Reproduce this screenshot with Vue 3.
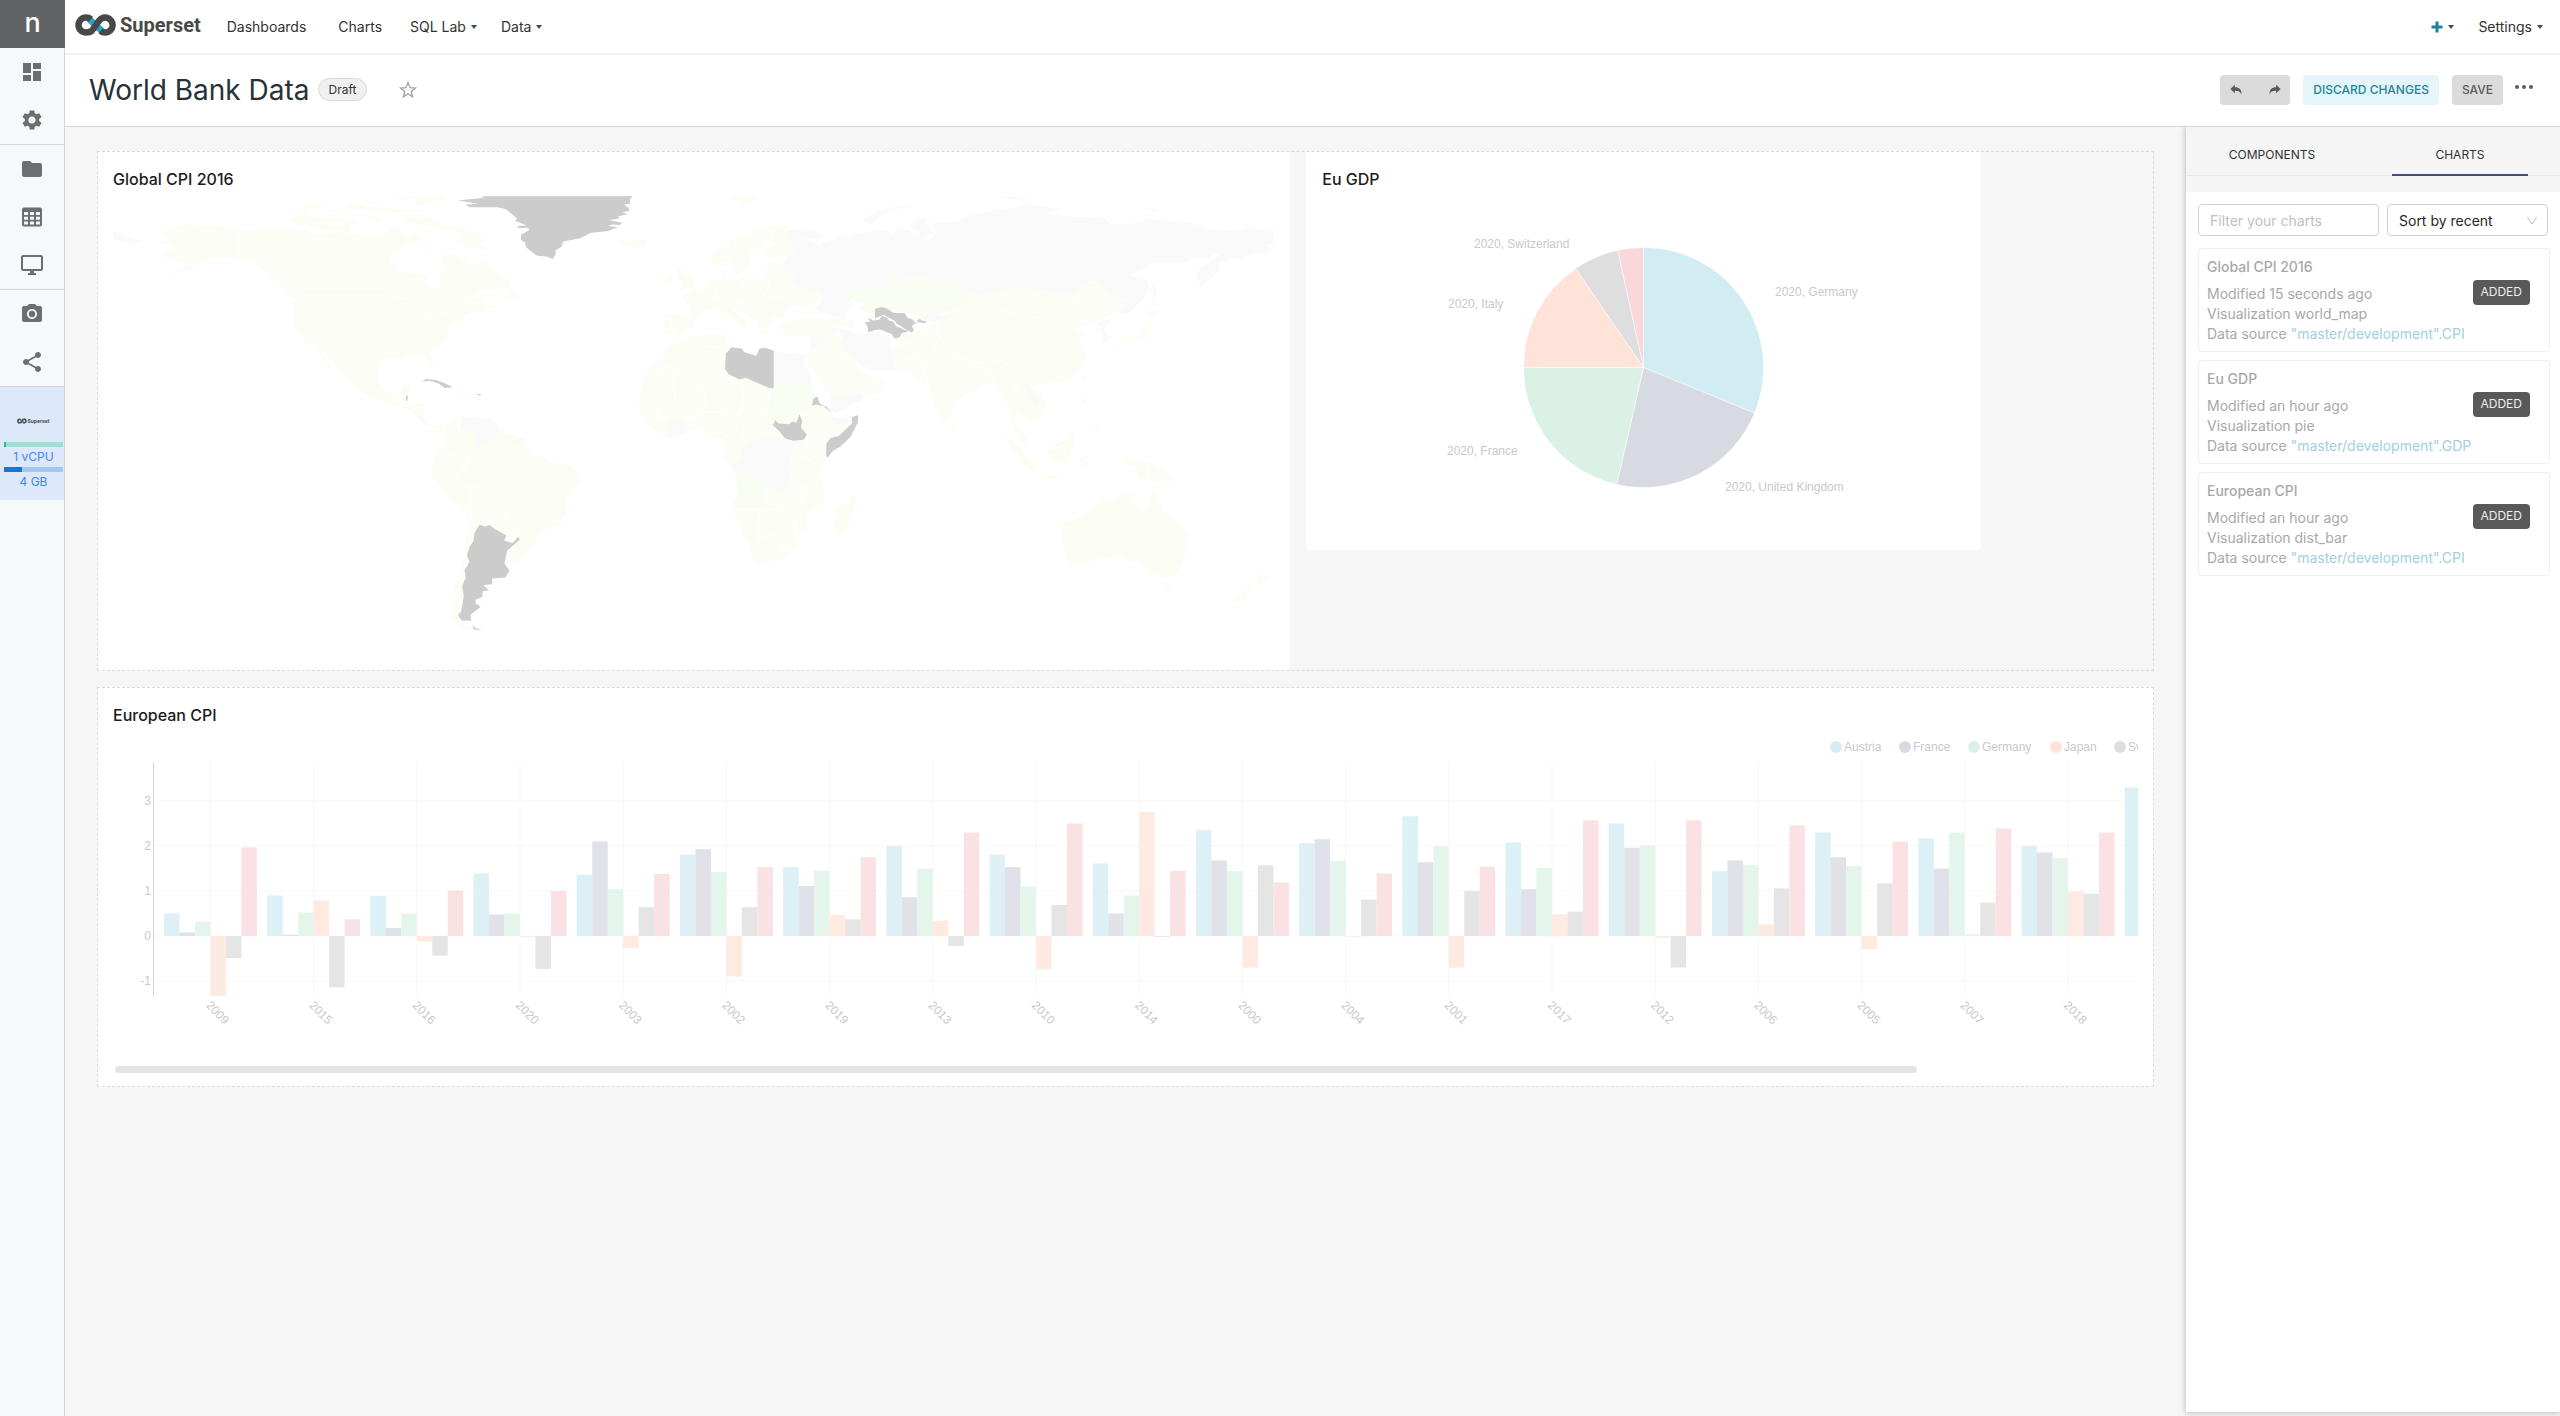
<script setup>
import { ref } from 'vue'

const filterText = ref('')
const sortBy = ref('recent')

const cards = [
  { title: 'Global CPI 2016', modified: '15 seconds ago', viz: 'world_map', source: '"master/development".CPI' },
  { title: 'Eu GDP', modified: 'an hour ago', viz: 'pie', source: '"master/development".GDP' },
  { title: 'European CPI', modified: 'an hour ago', viz: 'dist_bar', source: '"master/development".CPI' },
]

const navItems = [
  { label: 'Dashboards' },
  { label: 'Charts' },
  { label: 'SQL Lab', caret: true },
  { label: 'Data', caret: true },
]

/* Pie chart: end angle of each slice, clockwise from the top */
const pie = { cx: 321.5, cy: 171.5, r: 120 }
const stops = [
  [0, 112.3, '#d2ecf3'],
  [112.3, 192.9, '#d8dae2'],
  [192.9, 270, '#dbf1e5'],
  [270, 325.6, '#ffe2d8'],
  [325.6, 347.6, '#dedede'],
  [347.6, 360, '#f9d7da'],
]
const polar = (deg) => {
  const a = (deg * Math.PI) / 180
  return `${(pie.cx + pie.r * Math.sin(a)).toFixed(2)} ${(pie.cy - pie.r * Math.cos(a)).toFixed(2)}`
}
const slices = stops.map(([from, to, color]) => ({
  color,
  d: `M${pie.cx} ${pie.cy}L${polar(from)}A${pie.r} ${pie.r} 0 0 1 ${polar(to)}Z`,
}))
const pieLabels = [
  { text: '2020, Switzerland', x: 152, y: 52 },
  { text: '2020, Germany', x: 453, y: 100 },
  { text: '2020, Italy', x: 126, y: 112 },
  { text: '2020, France', x: 125, y: 259 },
  { text: '2020, United Kingdom', x: 403, y: 295 },
]

/* Grouped bars: Austria, France, Germany, Japan, Switzerland, United Kingdom */
const barColors = ['#dcf0f6', '#e1e1ea', '#e4f5eb', '#ffeae1', '#e5e5e5', '#fae1e4']
const years = [
  ['2009', [0.5, 0.08, 0.32, -1.33, -0.49, 1.97]],
  ['2015', [0.9, 0.03, 0.52, 0.79, -1.14, 0.37]],
  ['2016', [0.89, 0.18, 0.5, -0.12, -0.44, 1.01]],
  ['2020', [1.39, 0.48, 0.5, -0.02, -0.73, 1]],
  ['2003', [1.36, 2.1, 1.04, -0.27, 0.64, 1.38]],
  ['2002', [1.81, 1.93, 1.42, -0.9, 0.64, 1.53]],
  ['2019', [1.53, 1.11, 1.45, 0.47, 0.37, 1.75]],
  ['2013', [2, 0.86, 1.5, 0.34, -0.22, 2.3]],
  ['2010', [1.81, 1.53, 1.1, -0.74, 0.69, 2.5]],
  ['2014', [1.61, 0.5, 0.9, 2.76, -0.02, 1.45]],
  ['2000', [2.35, 1.68, 1.44, -0.7, 1.57, 1.19]],
  ['2004', [2.06, 2.15, 1.67, -0.02, 0.81, 1.39]],
  ['2001', [2.66, 1.64, 1.99, -0.7, 1, 1.54]],
  ['2017', [2.08, 1.04, 1.51, 0.48, 0.54, 2.57]],
  ['2012', [2.5, 1.96, 2.01, -0.04, -0.7, 2.57]],
  ['2006', [1.44, 1.68, 1.58, 0.26, 1.06, 2.46]],
  ['2005', [2.3, 1.75, 1.55, -0.29, 1.17, 2.1]],
  ['2007', [2.17, 1.5, 2.3, 0.04, 0.74, 2.39]],
  ['2018', [2, 1.86, 1.73, 0.99, 0.94, 2.3]],
  ['2011', [3.3]],
]
const zeroY = 205
const unit = 45
const step = 103.2
const barWidth = step * 0.15
const ticks = years.map(([label], i) => ({ label, x: 97.4 + i * step }))
const bars = years.flatMap(([, values], i) =>
  values.map((v, j) => ({
    x: 97.4 + i * step + (j - 3) * barWidth,
    y: v > 0 ? zeroY - v * unit : zeroY,
    h: Math.abs(v) * unit,
    color: barColors[j],
  })),
)
const legend = [
  { label: 'Austria', x: 1723, color: '#d2ecf3' },
  { label: 'France', x: 1792, color: '#d8dae2' },
  { label: 'Germany', x: 1861, color: '#dbf1e5' },
  { label: 'Japan', x: 1943, color: '#ffe2d8' },
  { label: 'Switzerland', x: 2007, color: '#dedede' },
]
</script>

<template>
  <div class="app">
    <svg class="defs" aria-hidden="true">
      <symbol id="infinity" viewBox="0 0 42 22">
        <path d="M14 5L28 18" stroke="#20a7c9" stroke-width="6.500" fill="none" />
        <path
          d="M17.500 16.500C15 18.300 13.500 18.500 11 18.500A7.500 7.500 0 0 1 11 3.500C13 3.500 14.500 4 16 5.200M16 17.500C20 14 22 7.500 26.500 4.500A7.500 7.500 0 1 1 25.500 17"
          stroke="#484848" stroke-width="6.500" fill="none"
        />
      </symbol>
    </svg>

    <aside class="rail">
      <a class="rail-brand" href="#">n</a>
      <nav class="rail-group" aria-label="Workspace">
        <a href="#" aria-label="Overview"><svg viewBox="0 0 24 24"><path d="M3 13h8V3H3v10zm0 8h8v-6H3v6zm10 0h8V11h-8v10zm0-18v6h8V3h-8z" /></svg></a>
        <a href="#" aria-label="Configuration"><svg viewBox="0 0 24 24"><path d="M19.140 12.940c.04-.3.06-.61.06-.94 0-.32-.02-.64-.07-.94l2.030-1.580a.49.49 0 0 0 .12-.61l-1.920-3.320a.488.488 0 0 0-.59-.22l-2.390.96c-.5-.38-1.030-.7-1.620-.94l-.36-2.540a.484.484 0 0 0-.48-.41h-3.840c-.24 0-.43.17-.47.41l-.36 2.540c-.59.24-1.130.57-1.620.94l-2.390-.96c-.22-.08-.47 0-.59.22L2.740 8.870c-.12.21-.08.47.12.61l2.030 1.580c-.05.3-.09.63-.09.94s.02.64.07.94l-2.030 1.580a.49.49 0 0 0-.12.61l1.920 3.320c.12.22.37.29.59.22l2.390-.96c.5.38 1.030.7 1.620.94l.36 2.540c.05.24.24.41.48.41h3.840c.24 0 .44-.17.47-.41l.36-2.540c.59-.24 1.130-.56 1.620-.94l2.390.96c.22.08.47 0 .59-.22l1.920-3.320c.12-.22.07-.47-.12-.61l-2.010-1.580zM12 15.600A3.610 3.610 0 0 1 8.400 12c0-1.980 1.620-3.600 3.600-3.600s3.600 1.620 3.600 3.600-1.620 3.600-3.600 3.600z" /></svg></a>
      </nav>
      <nav class="rail-group" aria-label="Resources">
        <a href="#" aria-label="Files"><svg viewBox="0 0 24 24"><path d="M10 4H4c-1.100 0-1.990.9-1.990 2L2 18c0 1.100.9 2 2 2h16c1.100 0 2-.9 2-2V8c0-1.100-.9-2-2-2h-8l-2-2z" /></svg></a>
        <a href="#" aria-label="Tables"><svg viewBox="0 0 24 24"><path fill-rule="evenodd" d="M4 2.500h16a2 2 0 0 1 2 2v15a2 2 0 0 1-2 2H4a2 2 0 0 1-2-2v-15a2 2 0 0 1 2-2zM4 7v3h4V7zm6 0v3h4V7zm6 0v3h4V7zM4 11.700v3h4v-3zm6 0v3h4v-3zm6 0v3h4v-3zM4 16.400v3h4v-3zm6 0v3h4v-3zm6 0v3h4v-3z" /></svg></a>
        <a href="#" aria-label="Desktop"><svg viewBox="0 0 24 24"><path d="M21 2H3c-1.100 0-2 .9-2 2v12c0 1.100.9 2 2 2h7v2H8v2h8v-2h-2v-2h7c1.100 0 2-.9 2-2V4c0-1.100-.9-2-2-2zm0 14H3V4h18v12z" /></svg></a>
      </nav>
      <nav class="rail-group" aria-label="Sharing">
        <a href="#" aria-label="Snapshots"><svg viewBox="0 0 24 24"><circle cx="12" cy="12" r="3.200" /><path d="M9 2L7.170 4H4c-1.100 0-2 .9-2 2v12c0 1.100.9 2 2 2h16c1.100 0 2-.9 2-2V6c0-1.100-.9-2-2-2h-3.170L15 2H9zm3 15c-2.760 0-5-2.240-5-5s2.240-5 5-5 5 2.240 5 5-2.240 5-5 5z" /></svg></a>
        <a href="#" aria-label="Share"><svg viewBox="0 0 24 24"><path d="M18 16.080c-.76 0-1.440.3-1.960.77L8.910 12.700c.05-.23.09-.46.09-.7s-.04-.47-.09-.7l7.050-4.110c.54.5 1.250.81 2.040.81 1.660 0 3-1.340 3-3s-1.340-3-3-3-3 1.340-3 3c0 .24.04.47.09.7L8.040 9.810C7.500 9.310 6.790 9 6 9c-1.660 0-3 1.340-3 3s1.340 3 3 3c.79 0 1.500-.31 2.040-.81l7.120 4.160c-.05.21-.08.43-.08.65 0 1.610 1.310 2.920 2.920 2.920s2.920-1.310 2.920-2.920-1.310-2.920-2.920-2.920z" /></svg></a>
      </nav>
      <div class="rail-app">
        <a class="mini-logo" href="#"><svg><use href="#infinity" /></svg><b>Superset</b></a>
        <div class="meter cpu"><i></i></div>
        <span>1 vCPU</span>
        <div class="meter mem"><i></i></div>
        <span>4 GB</span>
      </div>
    </aside>

    <div class="main">
      <header class="topbar">
        <a class="logo" href="#"><svg><use href="#infinity" /></svg><span>Superset</span></a>
        <nav class="menu">
          <a v-for="n in navItems" :key="n.label" href="#">{{ n.label }}<i v-if="n.caret" class="caret"></i></a>
        </nav>
        <nav class="menu right">
          <a href="#" aria-label="New"><svg class="plus" viewBox="0 0 12 12"><path d="M6 0.500v11M0.500 6h11" stroke="#1a85a0" stroke-width="3" /></svg><i class="caret"></i></a>
          <a href="#">Settings<i class="caret"></i></a>
        </nav>
      </header>

      <div class="titlebar">
        <h1>World Bank Data</h1>
        <span class="draft">Draft</span>
        <button class="star" aria-label="Favorite"><svg viewBox="0 0 24 24"><path d="M22 9.240l-7.190-.62L12 2 9.190 8.630 2 9.240l5.460 4.730L5.820 21 12 17.270 18.180 21l-1.630-7.030L22 9.240zM12 15.400l-3.760 2.270 1-4.280-3.320-2.880 4.380-.38L12 6.100l1.710 4.040 4.380.38-3.320 2.880 1 4.280L12 15.400z" /></svg></button>
        <div class="actions">
          <div class="history">
            <button aria-label="Undo"><svg viewBox="0 0 16 14"><path d="M6 0.500v3c5.500 0 8.500 2.500 8 9.500-1.200-4-3.500-5-8-5v3L0.500 5.800z" /></svg></button>
            <button aria-label="Redo"><svg viewBox="0 0 16 14"><path d="M10 0.500v3c-5.500 0-8.500 2.500-8 9.500 1.200-4 3.500-5 8-5v3l5.500-5.200z" /></svg></button>
          </div>
          <button class="btn discard">DISCARD CHANGES</button>
          <button class="btn save">SAVE</button>
          <button class="more" aria-label="More actions"><i></i><i></i><i></i></button>
        </div>
      </div>

      <div class="workspace">
        <main class="grid">
          <section class="row split">
            <article class="tile map-tile">
              <h2>Global CPI 2016</h2>
              <svg class="chart" viewBox="0 0 1161 459" role="img" aria-label="World map">
                <g transform="matrix(.3954 0 0 .3444 -23 -56)">
                  <g class="land">
                    <path d="M165 297L205 290 180 268 210 255 250 244 300 250 375 258 400 265 450 255 500 258 550 262 560 275 620 270 660 262 650 270 700 280 745 275 760 250 790 262 800 285 830 270 850 290 800 305 760 335 757 355 790 382 850 393 858 425 882 430 885 395 900 370 888 350 890 325 930 335 975 365 1000 345 1025 380 1070 415 1060 430 990 437 950 465 1000 455 990 485 1030 482 990 500 985 490 945 510 945 520 905 545 905 578 865 610 860 625 872 665 862 665 848 628 800 625 790 633 750 630 730 650 727 690 745 730 780 738 790 713 815 710 805 745 795 765 845 765 843 805 865 830 893 825 895 838 870 835 845 825 820 797 790 775 740 758 690 735 667 722 665 705 630 665 600 618 585 612 600 645 630 692 600 655 575 602 545 585 517 540 515 470 527 468 485 435 455 395 410 355 375 347 320 340 290 350 240 380 188 397 240 370 250 358 215 350 175 335 185 320 215 315 205 300Z" />
                    <path d="M505 235L515 212 550 213 570 225 640 228 680 240 650 252 660 262 600 262 545 245 500 238ZM530 195L575 183 600 190 540 205ZM590 210L625 200 640 208ZM640 200L660 185 720 190 740 198 830 202 870 208 780 212 700 205ZM755 163L905 163 890 178 840 190 815 185 830 175ZM675 170L700 175 740 183 700 185ZM790 225L850 222 880 232 895 245 940 255 970 272 1015 290 990 298 1005 320 975 315 940 305 920 295 945 280 925 262 880 258 860 250 810 245ZM700 220L730 225 745 240 720 238ZM825 300L850 308 862 322 840 312ZM1045 460L1065 432 1070 445 1085 452 1095 468 1075 462ZM930 727L950 728 968 735 940 737ZM1335 290L1380 292 1408 290 1405 305 1375 313 1345 305ZM1480 370L1495 362 1505 372 1500 385 1520 400 1535 418 1525 430 1490 432 1500 418 1490 400ZM1452 415L1460 397 1475 398 1468 415Z" />
                    <path d="M895 838L912 808 938 800 930 835 975 850 990 870 1030 835 1060 857 1100 865 1115 910 1150 920 1165 935 1205 942 1240 965 1242 990 1208 1035 1203 1080 1190 1115 1150 1133 1128 1150 1128 1175 1095 1215 1080 1235 1050 1228 1055 1192 1087 1160 1053 1148 1010 1118 985 1117 972 1140 953 1205 947 1250 941 1295 945 1325 930 1378 940 1395 968 1408 970 1425 940 1418 915 1385 912 1350 925 1320 920 1300 940 1240 955 1120 955 1080 905 1042 880 1000 864 965 868 915 888 895 897 868Z" />
                  </g>
                  <path class="none" d="M58 265L90 275 105 287 133 290 110 303 85 295 58 288ZM938 800L960 805 1020 812 1035 830 1027 860 990 898 980 895 975 850 935 840ZM1082 862L1103 870 1090 886 1080 882Z" />
                  <path class="mid" d="M1060 857L1080 855 1083 885 1065 888 1055 872Z" />
                  <g class="edge">
                    <path d="M375 258V347M527 452H750L820 465 855 490 848 517 910 500 965 465M575 602L650 612 690 635 727 665M410 350L440 362 485 420M765 757L790 740M795 790L843 775M962 1010L960 1080 970 1125M930 960L950 950 960 900 990 898M888 900L915 915 950 935M962 1010L990 1003 1000 1018 1035 1045 1055 1080 1052 1110 1085 1145M1015 1115L1022 1092 1052 1092M955 945L925 975 940 1000 962 1010M880 950L912 915M1060 1190L1095 1215" />
                  </g>
                  <path class="dark" d="M930 176L995 168 990 163H1372L1365 172 1366 185 1350 187 1362 197 1364 206 1345 210 1360 215 1335 222 1340 227 1312 232 1345 240 1340 247 1320 245 1310 250 1335 253 1310 264 1265 270 1240 285 1197 295 1192 310 1177 320 1178 330 1170 346 1155 338 1130 336 1103 312 1100 298 1090 290V275L1110 262 1108 255 1085 256 1080 250 1105 248 1075 235 1080 228 1050 200 1030 195H960L950 188 980 185Z" />
                  <path class="dark" d="M985 1117L1000 1122 1010 1118 1025 1130 1053 1148 1047 1163 1068 1170 1083 1152 1087 1160 1055 1192 1048 1230 1061 1250 1050 1270 1017 1273V1290L995 1292 1008 1307 993 1310 992 1327 975 1335V1345L988 1355 962 1378 964 1396 940 1395 930 1378 938 1370 945 1325 941 1295 950 1270 947 1250 959 1225 953 1205 960 1180 970 1163 972 1140ZM968 1408L975 1417 992 1425 970 1420ZM838 702L850 694 875 697 900 708 917 718 898 720 880 706 860 699ZM799 745L804 740 803 756 799 757ZM978 738h11v3h-11z" />
                </g>
                <g transform="matrix(.3954 0 0 .3444 587 -56)">
                  <g class="land">
                    <path d="M26 330L60 312 100 275 150 255 200 245 232 250 218 262 230 290 240 320 220 340 170 342 157 325 190 298 165 292 155 310 125 325 130 350 115 375 95 392 78 370 75 350 35 362ZM75 163L145 165 130 180 115 188 95 178Z" />
                    <path d="M175 358L210 355 210 375 235 395 250 425 305 445 310 460 262 490 240 480 215 490 215 515 175 510 185 525 170 540 172 565 155 560 140 525 80 480 75 490 120 525 108 555 95 530 40 485 10 495 -10 515 -20 545 -50 568 -90 562 -92 505 -25 510 -28 480 -50 458 -20 437 10 430 30 408 55 402 52 380 68 375 65 400 160 405 165 380Z" />
                    <path d="M200 535L225 525 270 515 330 520 345 530 347 557 330 565 275 570 215 568ZM320 512L385 525 388 545 350 540Z" />
                    <path d="M280 572L320 565 345 558 375 620 400 660 430 690 440 683 470 700 455 735 413 750 332 750 275 650 272 610Z" />
                    <path d="M480 600L530 560 600 530 640 490 705 447 750 437 800 428 900 440 950 443 970 412 1015 415 1045 455 1085 460 1050 500 1000 530 945 548 975 560 958 580 978 630 960 670 925 700 870 710 845 712 875 765 870 800 845 822 830 805 800 785 793 820 825 860 828 895 805 870 790 830 785 765 765 755 740 700 710 710 640 765 635 810 615 830 590 770 578 712 550 700 530 672 497 670 490 640Z" />
                    <path d="M-60 583L-30 578 0 567 55 562 70 575 62 600 80 602 142 626 165 603 186 612 230 620 265 625 262 640 283 700 290 745 334 793 345 812 400 799 398 822 355 890 322 923 302 955 315 1015 312 1050 270 1090 272 1130 250 1145 245 1175 210 1215 145 1233 133 1220 125 1180 105 1150 100 1110 80 1075 95 1020 88 965 78 945 57 920 62 870 35 865 5 835 -40 850 -80 865 -125 835 -150 800 -155 770 -148 705 -125 655 -95 635 -90 605ZM388 1030L395 1050 370 1140 350 1147 338 1130 345 1070 375 1050ZM636 820L648 835 645 852 636 848Z" />
                    <path d="M915 1115L970 1090 1015 1042 1040 1052 1065 1022 1100 1025 1090 1052 1130 1077 1147 1012 1175 1080 1235 1150 1237 1180 1205 1260 1180 1272 1130 1255 1108 1215 1090 1230 1060 1203 990 1222 930 1237 915 1150ZM1170 1295L1192 1297 1190 1310 1175 1313ZM1405 1242L1420 1262 1438 1270 1420 1290 1408 1285ZM1395 1295L1402 1303 1365 1342 1345 1338Z" />
                    <path d="M765 860L790 870 830 920 848 940 846 965 825 950ZM850 968L900 975 925 988 880 985ZM875 900L925 870 940 850 950 858 940 900 930 942 890 935ZM960 925L985 915 970 930 985 958 965 940 958 955ZM1060 920L1085 930 1130 933 1160 950 1190 975 1207 1003 1175 988 1145 993 1110 980 1100 948 1075 940ZM965 740L980 742 978 770 1000 785 985 778 968 765ZM980 835L1012 825 1008 850ZM1140 490L1168 500 1150 520 1128 510ZM1132 525L1140 545 1128 578 1100 582 1062 592 1060 585 1115 565ZM1045 598L1060 600 1052 615ZM873 730L888 725 880 738ZM1198 965L1225 950 1210 962Z" />
                  </g>
                  <path class="mid" d="M370 440L420 430 480 432 480 408 550 395 610 405 660 435 705 447 640 490 600 507 560 510 520 503 460 485 442 490 442 520 425 500 400 490 415 475 372 460ZM88 967L115 967 125 985 155 980 162 1070 80 1068 95 1020ZM180 707L283 705 290 745 283 772 250 797 243 820 198 823 168 790Z" />
                  <path class="none" d="M218 262L240 257 290 265 318 280 300 290 260 283 280 295 300 310 320 292 345 290 350 270 360 283 400 270 470 262 485 272 500 255 530 262 545 280 555 270 530 250 545 232 573 228 575 250 590 270 565 288 580 290 597 270 590 235 610 240 650 235 690 215 760 200 800 195 830 185 910 200 870 215 940 223 1020 225 1040 245 1120 240 1125 228 1240 240 1290 258 1370 265 1380 255 1452 262V298L1432 305 1447 322 1400 330 1370 345 1340 345 1310 360 1315 378 1265 428 1255 390 1265 370 1325 325 1300 332 1290 342 1250 340 1230 355 1150 355 1087 395 1130 405 1135 430 1115 470 1080 505 1055 500 1085 460 1045 455 1020 425 1000 410 970 412 950 443 900 440 800 428 750 437 705 447 660 435 610 405 550 395 480 408 480 432 420 430 370 440 372 460 390 475 375 490 365 520 330 508 290 490 310 460 305 445 250 425 235 395 210 375 215 345 240 320 230 290ZM408 237L440 208 480 196 545 191 480 205 445 232 440 245ZM745 164L795 164 840 175 790 172ZM1105 198L1160 200 1150 206ZM1143 408L1158 445 1147 468Z" />
                  <path class="none" d="M345 545L385 555 400 565 440 555 480 570 482 600 490 640 497 670 440 670 405 652 365 610 360 570ZM330 748L405 735 413 752 345 792 332 785ZM186 612L265 625 262 640 283 704H186ZM140 868L230 865 235 885 222 940 228 985 215 1020 160 1005 155 980 125 985 115 965 85 965 80 940 105 930 105 895ZM-82 815H-42V855L-82 862ZM334 805L384 804V823L345 830ZM553 515L580 505 635 510 590 530 575 525ZM280 572L325 563 310 590 280 605ZM1005 530L1040 517 1022 548 1038 575 1020 588 1015 555ZM805 712L830 710 858 760 848 775 830 735ZM966 690L975 678 972 697Z" />
                  <g class="edge">
                    <path d="M705 447L735 485 800 505 850 515 890 510 935 478 963 467 935 455M600 530L600 560 625 600 640 628 710 650 765 640 790 670 830 700 870 705M640 628L645 645 730 668 740 695M578 712L560 650 590 615 600 580 565 555M480 600L530 590 565 555M490 640L540 635 560 600M765 655L745 690M790 745L800 710M80 320L100 285 130 268 175 265 185 295M60 405L105 405 110 440 170 440 175 400M35 430L40 460 90 470 150 460 170 440M0 440L38 462M170 455L220 460 240 480M90 470L130 495 160 510M-75 510L-70 560M-92 655L-40 690 8 725 60 695M-70 675L-62 765 -115 770M-85 655L-115 700M105 695L110 745 100 800 60 790 0 790 -20 785M8 725L15 760 0 790M180 707L168 790 110 835 60 865M100 800L110 835 105 870M-42 815L-20 800 0 830M-115 770L-105 800 -82 815M-120 790L-90 820M270 865L265 885 320 885M235 885L265 920 302 950M225 930L265 920M228 985L260 1010 315 1010M162 1070L200 1075 240 1040 265 1050M150 1080L145 1180 125 1180M80 1070L162 1074M150 1155L190 1145 240 1115 245 1175M200 1075L240 1115 255 1060 260 1010M-1 567L10 600 60 602M332 750L275 650M320 590L375 640M405 735L440 710 440 683M1134 935V993M880 900L915 890 940 865M210 1180l10 5-8 12-10-4z" />
                  </g>
                  <path class="dark" d="M65 620L80 602 105 605 112 616 142 626 150 606 165 603 186 612V720L176 721 115 690 100 695 72 680 63 665ZM283 772L286 752 296 744 302 765 320 775 334 793 312 772 292 768ZM184 828L190 813 198 823 225 825 232 817 243 820 251 797 258 815 255 835 270 856 262 870 235 873 214 866 200 845ZM400 799L398 822 380 862 355 890 335 903 322 923 319 915V882L330 865 350 860 384 823V804Z" />
                  <path class="dark" d="M416 530L430 527 424 515 438 524 452 522 460 511 472 515 478 525 488 526 495 540 527 556 510 560 505 572 492 577 484 563 455 550 440 552 425 558 423 540ZM442 490L460 485 475 491 490 502 518 503 523 515 535 520 545 530 555 518 560 524 575 527 565 532 550 528 535 540 541 552 535 559 520 550 497 533 490 523 475 515 465 507 452 513 442 518Z" />
                </g>
              </svg>
            </article>

            <article class="tile pie-tile">
              <h2>Eu GDP</h2>
              <svg class="chart" viewBox="0 0 643 338" role="img" aria-label="Pie chart">
                <path v-for="s in slices" :key="s.color" :d="s.d" :fill="s.color" stroke="#fff" stroke-opacity="0.5" />
                <text v-for="l in pieLabels" :key="l.text" :x="l.x" :y="l.y">{{ l.text }}</text>
              </svg>
            </article>
          </section>

          <section class="row bar-row">
            <article class="tile">
              <h2>European CPI</h2>
              <svg class="chart" viewBox="0 1 2025 334" role="img" aria-label="Grouped bar chart">
                <g v-for="l in legend" :key="l.label">
                  <circle :cx="l.x" cy="16" r="6" :fill="l.color" />
                  <text :x="l.x + 8" y="20">{{ l.label }}</text>
                </g>
                <g class="gridlines">
                  <path v-for="t in ticks.slice(0, 19)" :key="t.label" :d="`M${t.x} 31V265`" />
                  <path v-for="v in [3, 2, 1, 0, -1]" :key="v" :d="`M41 ${zeroY - v * unit}H2025`" />
                </g>
                <rect v-for="(b, i) in bars" :key="i" :x="b.x" :y="b.y" :width="barWidth" :height="b.h" :fill="b.color" />
                <path d="M40.500 31V265" stroke="#d4d4d4" />
                <text v-for="v in [3, 2, 1, 0, -1]" :key="v" class="tick" x="38" :y="zeroY - v * unit + 4">{{ v }}</text>
                <text v-for="t in ticks.slice(0, 19)" :key="t.label" :transform="`translate(${t.x - 5} 275) rotate(45)`">{{ t.label }}</text>
              </svg>
              <div class="scroll"><i></i></div>
            </article>
          </section>
        </main>

        <aside class="panel">
          <div class="tabs" role="tablist">
            <button role="tab" aria-selected="false">COMPONENTS</button>
            <button role="tab" aria-selected="true" class="active">CHARTS</button>
          </div>
          <div class="filters">
            <input v-model="filterText" type="text" placeholder="Filter your charts" aria-label="Filter your charts" />
            <div class="select">
              <select v-model="sortBy" aria-label="Sort charts">
                <option value="recent">Sort by recent</option>
                <option value="name">Sort by name</option>
              </select>
              <svg viewBox="0 0 10 8"><path d="M0.500 0.500L5 7 9.500 0.500" fill="none" stroke="#bfbfbf" /></svg>
            </div>
          </div>
          <ul class="cards">
            <li v-for="c in cards" :key="c.title">
              <div class="info">
                <h3>{{ c.title }}</h3>
                <p>Modified {{ c.modified }}</p>
                <p>Visualization {{ c.viz }}</p>
                <p>Data source <a href="#">{{ c.source }}</a></p>
              </div>
              <span class="added">ADDED</span>
            </li>
          </ul>
        </aside>
      </div>
    </div>
  </div>
</template>

<style>
body {
  margin: 0;
}
</style>

<style scoped>
* {
  box-sizing: border-box;
}
.app {
  display: flex;
  min-height: 100vh;
  font-family: Inter, "Liberation Sans", sans-serif;
  font-size: 14px;
  color: #323232;
  background: #f6f6f6;
}
a {
  color: inherit;
  text-decoration: none;
}
button {
  font: inherit;
  color: inherit;
  border: 0;
  padding: 0;
  background: none;
}
h1,
h2,
h3,
p,
ul {
  margin: 0;
  padding: 0;
}
.defs {
  position: absolute;
  width: 0;
  height: 0;
}

.rail {
  flex: 0 0 65px;
  border-right: 1px solid #d4d5d8;
  background: #f7f8fb;
}
.rail-brand {
  display: block;
  height: 48px;
  margin-right: -1px;
  line-height: 46px;
  text-align: center;
  font-size: 27px;
  font-weight: 500;
  color: #fff;
  background: #626365;
}
.rail-group {
  border-bottom: 1px solid #d4d5d8;
}
.rail-group a {
  display: flex;
  align-items: center;
  justify-content: center;
  height: 48px;
}
.rail-group svg {
  width: 24px;
  height: 24px;
  fill: #6d6e70;
}
.rail-app {
  height: 113px;
  padding: 28px 1px 0 4px;
  background: #dde8fb;
  color: #4285f4;
  font-size: 12px;
  line-height: 20px;
  text-align: center;
}
.rail-app span {
  display: block;
}
.mini-logo {
  display: flex;
  align-items: center;
  justify-content: center;
  height: 12px;
  margin-bottom: 15px;
  font-size: 5px;
  line-height: 12px;
  color: #484848;
}
.mini-logo svg {
  width: 10px;
  height: 6px;
}
.meter {
  height: 5px;
}
.meter i {
  display: block;
  height: 5px;
}
.cpu {
  background: #a2dfd1;
}
.cpu i {
  width: 2px;
  background: #19c37d;
}
.mem {
  background: #a3c7ef;
}
.mem i {
  width: 30%;
  background: #1478d4;
}

.main {
  flex: 1;
  min-width: 0;
  display: flex;
  flex-direction: column;
}
.topbar {
  display: flex;
  align-items: center;
  height: 55px;
  padding: 0 17px 0 10px;
  border-bottom: 2px solid #f2f2f2;
  background: #fff;
}
.logo {
  display: flex;
  align-items: center;
  margin-right: 26px;
  padding-bottom: 4px;
  font-family: Roboto, "Liberation Sans", sans-serif;
  font-size: 20px;
  font-weight: 700;
  color: #484848;
}
.logo svg {
  width: 42px;
  height: 22px;
  margin-right: 3px;
}
.menu {
  display: flex;
  gap: 32px;
}
.menu a {
  display: flex;
  align-items: center;
}
.menu a:nth-child(3) {
  margin-left: -4px;
}
.menu a:nth-child(4) {
  margin-left: -8px;
}
.menu.right {
  gap: 24px;
  margin-left: auto;
}
.caret {
  margin-left: 5px;
  border: 3px solid transparent;
  border-top: 4px solid #4a4a4a;
  border-bottom: 0;
}
.plus {
  width: 12px;
  height: 12px;
}
.titlebar {
  display: flex;
  align-items: center;
  height: 72px;
  padding: 0 27px 2px 24px;
  border-bottom: 1px solid #d9d9d9;
  background: #fff;
}
h1 {
  font-size: 28px;
  font-weight: 400;
  color: #263238;
}
.draft {
  height: 23px;
  margin-left: 8px;
  padding: 0 10px;
  border: 1px solid #d9d9d9;
  border-radius: 12px;
  background: #f0f0f0;
  font-size: 12px;
  line-height: 21px;
}
.star {
  margin-left: 30px;
}
.star svg {
  display: block;
  width: 22px;
  height: 22px;
  fill: #a8a8a8;
}
.actions {
  display: flex;
  align-items: center;
  gap: 13px;
  margin-left: auto;
  font-size: 12px;
}
.history {
  display: flex;
}
.history button {
  display: flex;
  align-items: center;
  justify-content: center;
  width: 35px;
  height: 30px;
  padding-right: 3px;
  background: #dbdbdb;
  border-radius: 4px 0 0 4px;
}
.history button + button {
  padding: 0 0 0 3px;
  border-radius: 0 4px 4px 0;
}
.history svg {
  width: 13px;
  height: 12px;
  fill: #595959;
}
.btn {
  height: 30px;
  padding: 0 10px;
  border-radius: 4px;
  font-weight: 500;
}
.discard {
  background: #e6f5f9;
  color: #1a85a0;
}
.save {
  background: #dbdbdb;
  color: #5c5c5c;
}
.more {
  display: flex;
  gap: 3px;
  margin-left: -1px;
  padding-bottom: 5px;
}
.more i {
  width: 4px;
  height: 4px;
  border-radius: 2px;
  background: #5c5c5c;
}

.workspace {
  flex: 1;
  display: flex;
}
.grid {
  flex: 1;
  min-width: 0;
  padding: 24px 32px;
}
.row {
  outline: 1px dashed #dadada;
  outline-offset: -1px;
  margin-bottom: 16px;
}
.split {
  display: grid;
  grid-template-columns: repeat(12, 1fr);
  gap: 16px;
  align-items: start;
}
.tile {
  padding: 16px;
  background: #fff;
  border-radius: 4px;
}
.map-tile {
  grid-column: span 7;
  min-height: 520px;
}
.pie-tile {
  grid-column: span 4;
}
.bar-row .tile {
  padding-bottom: 14px;
}
h2 {
  height: 29px;
  font-size: 16px;
  font-weight: 500;
  line-height: 25px;
  color: #1c1c1c;
}
.chart {
  display: block;
  width: 100%;
  height: auto;
  overflow: hidden;
  font-family: "Liberation Sans", Arial, sans-serif;
  font-size: 12px;
  fill: #c9c9c9;
}
.land {
  fill: #fcfdf4;
}
.mid {
  fill: #f9fdf2;
}
.none {
  fill: #fafafb;
}
.dark {
  fill: #ccc;
}
.edge {
  fill: none;
  stroke: #fff;
  stroke-width: 3;
}
.tick {
  text-anchor: end;
}
.gridlines {
  stroke: #f7f7f7;
}
.scroll i {
  display: block;
  width: 89%;
  height: 7px;
  margin-left: 2px;
  border-radius: 4px;
  background: #e4e4e4;
}

.panel {
  flex: 0 0 374px;
  margin-bottom: 4px;
  background: #fff;
  box-shadow: 0 0 6px 1px rgba(0, 0, 0, 0.22);
  clip-path: inset(0 0 -4px -8px);
}
.tabs {
  display: flex;
  gap: 52px;
  height: 65px;
  padding: 0 32px 0 18px;
  background: linear-gradient(#e8e8e8, #e8e8e8) 0 48px / 100% 1px no-repeat #f5f5f5;
  font-size: 12px;
}
.tabs button {
  flex: 1;
  height: 49px;
  padding-top: 7px;
  border-bottom: 2px solid transparent;
}
.tabs .active {
  border-color: #444e7c;
}
.filters {
  display: flex;
  gap: 8px;
  padding: 12px;
}
.filters input,
.filters select {
  width: 100%;
  height: 32px;
  padding: 0 11px;
  border: 1px solid #d0d0d6;
  border-radius: 4px;
  background: #fff;
  font: inherit;
  color: #262626;
  appearance: none;
}
.filters input {
  flex: 0 0 181px;
}
.filters input::placeholder {
  color: #bfbfbf;
}
.select {
  position: relative;
  flex: 1;
}
.select svg {
  position: absolute;
  right: 11px;
  top: 13px;
  width: 10px;
  height: 8px;
}
.cards {
  list-style: none;
  margin: 0 10px 0 12px;
}
.cards li {
  display: flex;
  align-items: flex-start;
  justify-content: space-between;
  height: 104px;
  margin-bottom: 8px;
  padding: 8px 19px 0 8px;
  border: 1px solid #efefef;
  border-radius: 4px;
  color: #a8a8a8;
  line-height: 20px;
}
h3 {
  height: 27px;
  font-size: 14px;
  font-weight: 500;
}
.info a {
  color: #a3cfdc;
}
.added {
  height: 25px;
  margin-top: 23px;
  padding: 0 8px;
  border-radius: 4px;
  background: #595959;
  color: #efefef;
  font-size: 12px;
  line-height: 24px;
}
</style>
